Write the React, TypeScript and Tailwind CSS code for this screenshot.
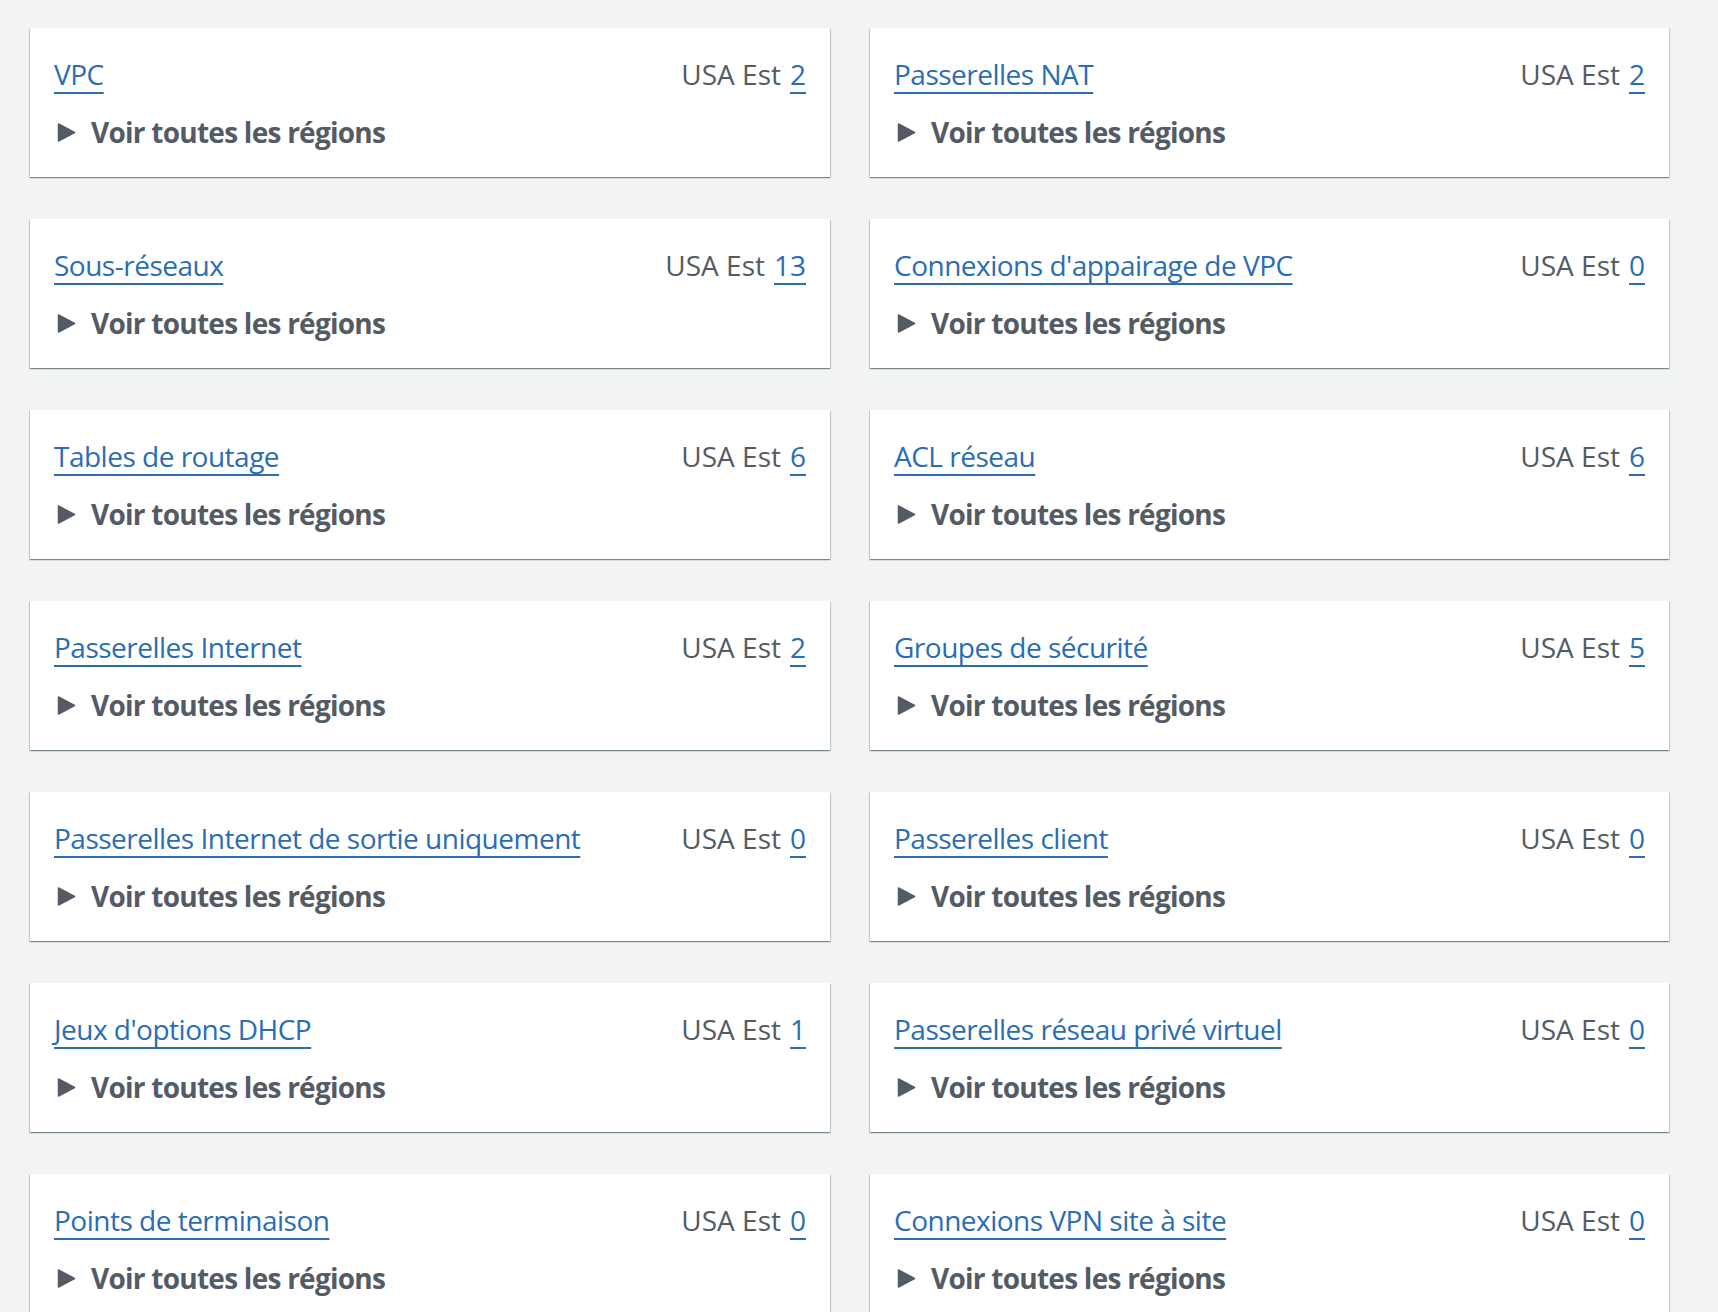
import React from "react";

type Item = { name: string; count: number };

const left: Item[] = [
  { name: "VPC", count: 2 },
  { name: "Sous-réseaux", count: 13 },
  { name: "Tables de routage", count: 6 },
  { name: "Passerelles Internet", count: 2 },
  { name: "Passerelles Internet de sortie uniquement", count: 0 },
  { name: "Jeux d'options DHCP", count: 1 },
  { name: "Points de terminaison", count: 0 },
];

const right: Item[] = [
  { name: "Passerelles NAT", count: 2 },
  { name: "Connexions d'appairage de VPC", count: 0 },
  { name: "ACL réseau", count: 6 },
  { name: "Groupes de sécurité", count: 5 },
  { name: "Passerelles client", count: 0 },
  { name: "Passerelles réseau privé virtuel", count: 0 },
  { name: "Connexions VPN site à site", count: 0 },
];

const linkCls =
  "text-[#2a6db5] underline decoration-2 underline-offset-[7px] [text-decoration-skip-ink:none]";

function Card({ item }: { item: Item }) {
  return (
    <div className="bg-white h-[149px] pl-[24px] pr-[24px] pt-[26px] shadow-[0_1px_1px_0_rgba(0,28,36,0.3),1px_1px_1px_0_rgba(0,28,36,0.15),-1px_1px_1px_0_rgba(0,28,36,0.15)]">
      <div className="flex justify-between items-baseline leading-[40px]">
        <a className={`${linkCls} tracking-[-0.5px]`}>{item.name}</a>
        <span className="text-[#545b64] whitespace-nowrap">
          USA Est<span className="inline-block w-[9px]"></span>
          <a className={linkCls}>{item.count}</a>
        </span>
      </div>
      <div className="flex items-center mt-[18px] leading-[40px]">
        <svg width="19" height="19" viewBox="0 0 19 19" className="ml-[3px] mr-[15px]">
          <path
            d="M1.5 1 L17.5 9.5 L1.5 18 Z"
            fill="#545b64"
            stroke="#545b64"
            strokeWidth="1.5"
            strokeLinejoin="round"
          />
        </svg>
        <span className="font-bold text-[#545b64] tracking-[-0.75px]">Voir toutes les régions</span>
      </div>
    </div>
  );
}

export default function App() {
  return (
    <div
      className="min-h-[1312px] bg-[#f2f3f3] pl-[30px] pt-[28px] text-[28px]"
      style={{ fontFamily: '"Open Sans", "Noto Sans", sans-serif' }}
    >
      <div className="grid grid-cols-[800px_799px] gap-x-[40px] gap-y-[42px]">
        {left.map((l, i) => (
          <React.Fragment key={i}>
            <Card item={l} />
            <Card item={right[i]} />
          </React.Fragment>
        ))}
      </div>
    </div>
  );
}
